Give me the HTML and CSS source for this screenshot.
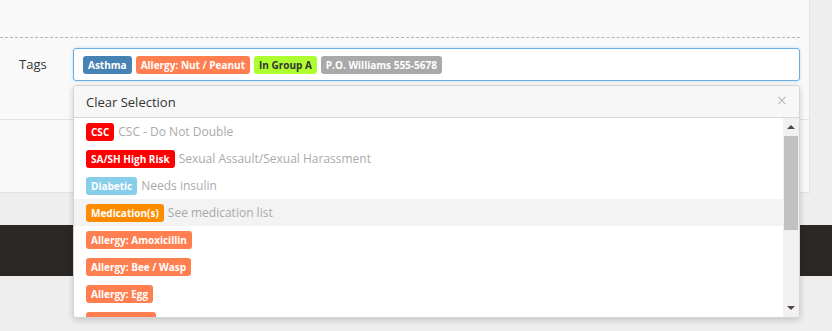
FILE: index.html
```html
<!DOCTYPE html>
<html lang="en">
<head>
  <meta charset="UTF-8" />
  <meta name="viewport" content="width=device-width, initial-scale=1.0" />
  <title>Inmate Tags</title>
  <link rel="stylesheet" href="styles.css">
</head>
<body>
  <div class="panel">
    <div class="panel-top"></div>

    <div class="form-row">
      <label class="form-label">Tags</label>
      <div class="tag-field">
        <div class="tag-input">
          <span class="tag asthma">Asthma</span>
          <span class="tag allergy">Allergy: Nut / Peanut</span>
          <span class="tag group">In Group A</span>
          <span class="tag contact">P.O. Williams 555-5678</span>
        </div>

        <div class="dropdown">
          <div class="dropdown-head">
            <span>Clear Selection</span>
            <span class="close">&times;</span>
          </div>
          <div class="dropdown-body">
            <ul class="options">
              <li><span class="tag red">CSC</span><span class="desc">CSC - Do Not Double</span></li>
              <li><span class="tag red">SA/SH High Risk</span><span class="desc">Sexual Assault/Sexual Harassment</span></li>
              <li><span class="tag diabetic">Diabetic</span><span class="desc">Needs insulin</span></li>
              <li class="hover"><span class="tag meds">Medication(s)</span><span class="desc">See medication list</span></li>
              <li><span class="tag allergy">Allergy: Amoxicillin</span></li>
              <li><span class="tag allergy">Allergy: Bee / Wasp</span></li>
              <li><span class="tag allergy">Allergy: Egg</span></li>
              <li><span class="tag allergy">Allergy: Fish</span></li>
            </ul>
            <div class="scrollbar">
              <span class="arrow up"></span>
              <div class="track"><div class="thumb"></div></div>
              <span class="arrow down"></span>
            </div>
          </div>
        </div>
      </div>
    </div>

    <div class="panel-footer"></div>
  </div>

  <div class="gap"></div>
  <div class="dark-band"></div>
  <div class="page-bottom"></div>
</body>
</html>
```

FILE: styles.css
```css
body {
  margin: 0;
  font-family: "Open Sans", Arial, sans-serif;
  font-size: 13px;
  color: #333;
  background: #eeeeee;
}
.panel {
  width: 809px;
  background: #f9f9f9;
  border-right: 1px solid #e2e2e2;
  border-bottom: 1px solid #e2e2e2;
}
.panel-top {
  height: 37px;
  margin-right: 9px;
  border-bottom: 1px dashed #b5b5b5;
}
.form-row {
  display: flex;
  padding: 10px 9px 0 0;
  height: 71px;
  border-bottom: 1px solid #e2e2e2;
}
.form-label {
  width: 73px;
  box-sizing: border-box;
  padding: 7px 0 0 19px;
  font-size: 13px;
  color: #333;
}
.tag-field {
  position: relative;
  flex: 1;
}
.tag-input {
  height: 33px;
  box-sizing: border-box;
  border: 1px solid #66afe9;
  border-radius: 3px;
  background: #fff;
  display: flex;
  align-items: center;
  gap: 4px;
  padding: 0 9px;
  box-shadow: 0 0 3px rgba(102, 175, 233, 0.4);
}
.tag {
  display: inline-block;
  font-size: 10px;
  font-weight: 700;
  line-height: 14px;
  padding: 2px 5px;
  border-radius: 3px;
  color: #fff;
  white-space: nowrap;
}
.tag.asthma { background: #4682b4; }
.tag.allergy { background: #ff7f50; }
.tag.group { background: #adff2f; color: #333; }
.tag.contact { background: #a9a9a9; }
.tag.red { background: #ff0000; }
.tag.diabetic { background: #87ceeb; }
.tag.meds { background: #ff8c00; }

.dropdown {
  position: absolute;
  top: 37px;
  left: 0;
  right: 0;
  height: 233px;
  box-sizing: border-box;
  background: #fff;
  border: 1px solid #d4d4d4;
  border-radius: 3px;
  box-shadow: 0 2px 6px rgba(0, 0, 0, 0.18);
  display: flex;
  flex-direction: column;
  overflow: hidden;
}
.dropdown-head {
  height: 32px;
  flex-shrink: 0;
  box-sizing: border-box;
  background: #f7f7f7;
  border-bottom: 1px solid #d8d8d8;
  display: flex;
  align-items: center;
  justify-content: space-between;
  padding: 0 12px 0 12px;
  font-size: 13px;
  color: #333;
}
.close {
  font-size: 18px;
  color: #aaa;
  font-weight: 300;
  margin-top: -4px;
}
.dropdown-body {
  flex: 1;
  display: flex;
  min-height: 0;
}
.options {
  list-style: none;
  margin: 0;
  padding: 0;
  flex: 1;
  overflow: hidden;
}
.options li {
  height: 27px;
  display: flex;
  align-items: center;
  padding-left: 12px;
}
.options li.hover {
  background: #f3f3f3;
}
.desc {
  margin-left: 4px;
  color: #aaa;
  font-size: 12px;
}
.scrollbar {
  width: 16px;
  background: #f1f1f1;
  display: flex;
  flex-direction: column;
  align-items: center;
}
.track {
  flex: 1;
  width: 100%;
  padding: 7px 1px 0;
  box-sizing: border-box;
}
.thumb {
  height: 94px;
  background: #c1c1c1;
}
.arrow {
  width: 0;
  height: 0;
  border-left: 4px solid transparent;
  border-right: 4px solid transparent;
}
.arrow.up {
  margin-top: 7px;
  border-bottom: 4px solid #5b4646;
}
.arrow.down {
  margin-bottom: 7px;
  border-top: 4px solid #5b4646;
}
.panel-footer {
  height: 72px;
}
.gap {
  height: 32px;
}
.dark-band {
  height: 51px;
  background: #2b2724;
}
.page-bottom {
  height: 55px;
}
```
